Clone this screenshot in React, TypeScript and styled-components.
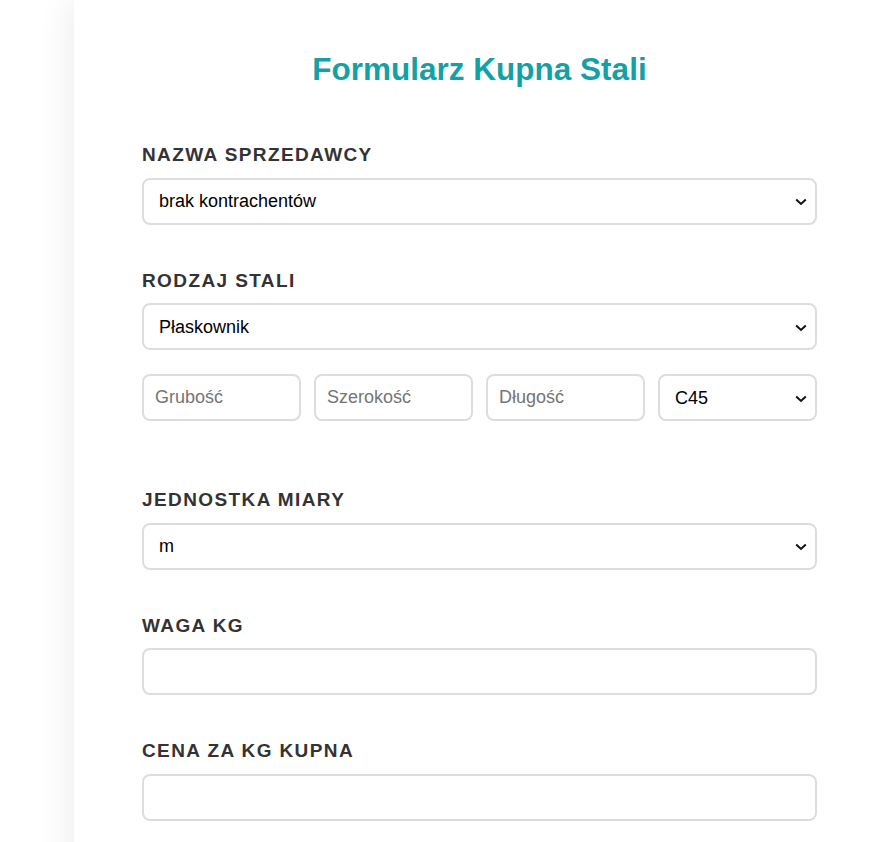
import React from 'react'
import { styled, createGlobalStyle } from 'styled-components'

const GlobalStyle = createGlobalStyle`
    html, body {
        margin: 0;
        padding: 0;
        background: #ffffff;
        font-family: "Liberation Sans", Arial, sans-serif;
    }
`;

const Chevron = () => (
    <ChevronIcon width='12' height='8' viewBox='0 0 12 8'>
        <path d='M1.2 1.5 L6 6 L10.8 1.5' fill='none' stroke='#111' strokeWidth='2' />
    </ChevronIcon>
)

const SelectField = ({ value, label }: { value: string; label: string }) => (
    <SelectWrap>
        <Select defaultValue={value}>
            <option value={value}>{label}</option>
        </Select>
        <Chevron />
    </SelectWrap>
)

const App = () => {
    return (
        <>
            <GlobalStyle />
            <Page>
                <Card>
                    <Title>Formularz Kupna Stali</Title>

                    <Group>
                        <Label>Nazwa sprzedawcy</Label>
                        <SelectField value='brak' label='brak kontrachentów' />
                    </Group>

                    <Group>
                        <Label>Rodzaj stali</Label>
                        <SelectField value='plaskownik' label='Płaskownik' />
                        <DimRow>
                            <Input placeholder='Grubość' />
                            <Input placeholder='Szerokość' />
                            <Input placeholder='Długość' />
                            <SelectField value='c45' label='C45' />
                        </DimRow>
                    </Group>

                    <Group>
                        <Label>Jednostka miary</Label>
                        <SelectField value='m' label='m' />
                    </Group>

                    <Group>
                        <Label>Waga kg</Label>
                        <Input />
                    </Group>

                    <Group>
                        <Label>Cena za kg kupna</Label>
                        <Input />
                    </Group>
                </Card>
            </Page>
        </>
    )
}

const Page = styled.div`
    padding-left: 74px;
    height: 842px;
    overflow: hidden;
`;

const Card = styled.div`
    box-sizing: border-box;
    width: 810px;
    min-height: 842px;
    background: #ffffff;
    padding: 51px 67px 20px 68px;
    box-shadow: 0 0 36px rgba(0, 0, 0, 0.09);
`;

const Title = styled.h1`
    margin: 0 0 56px;
    text-align: center;
    color: #14a1a6;
    font-size: 31.5px;
    line-height: 37px;
    font-weight: bold;
`;

const Group = styled.div`
    display: flex;
    flex-direction: column;
    margin-bottom: 45px;
`;

const Label = styled.label`
    display: block;
    margin-bottom: 11.5px;
    font-size: 19px;
    line-height: 22px;
    font-weight: bold;
    text-transform: uppercase;
    letter-spacing: 1.4px;
    color: #333333;
`;

const fieldStyles = `
    box-sizing: border-box;
    display: block;
    width: 100%;
    height: 47px;
    padding: 0 12px 0 11px;
    border: 2px solid #dddddd;
    border-radius: 8px;
    background: #ffffff;
    font-family: "Liberation Sans", Arial, sans-serif;
    font-size: 18px;
    color: #000000;
    outline: none;
`;

const SelectWrap = styled.div`
    position: relative;
    width: 100%;
`;

const Select = styled.select`
    ${fieldStyles}
    appearance: none;
    -webkit-appearance: none;
    padding-left: 15px;
    padding-right: 32px;
`;

const ChevronIcon = styled.svg`
    position: absolute;
    right: 10px;
    top: 50%;
    margin-top: -3px;
    pointer-events: none;
`;

const Input = styled.input`
    ${fieldStyles}

    &::placeholder {
        color: #757575;
    }
`;

const DimRow = styled.div`
    display: grid;
    grid-template-columns: repeat(4, 1fr);
    gap: 13px;
    margin-top: 24px;
    margin-bottom: 23px;
`;

export default App
